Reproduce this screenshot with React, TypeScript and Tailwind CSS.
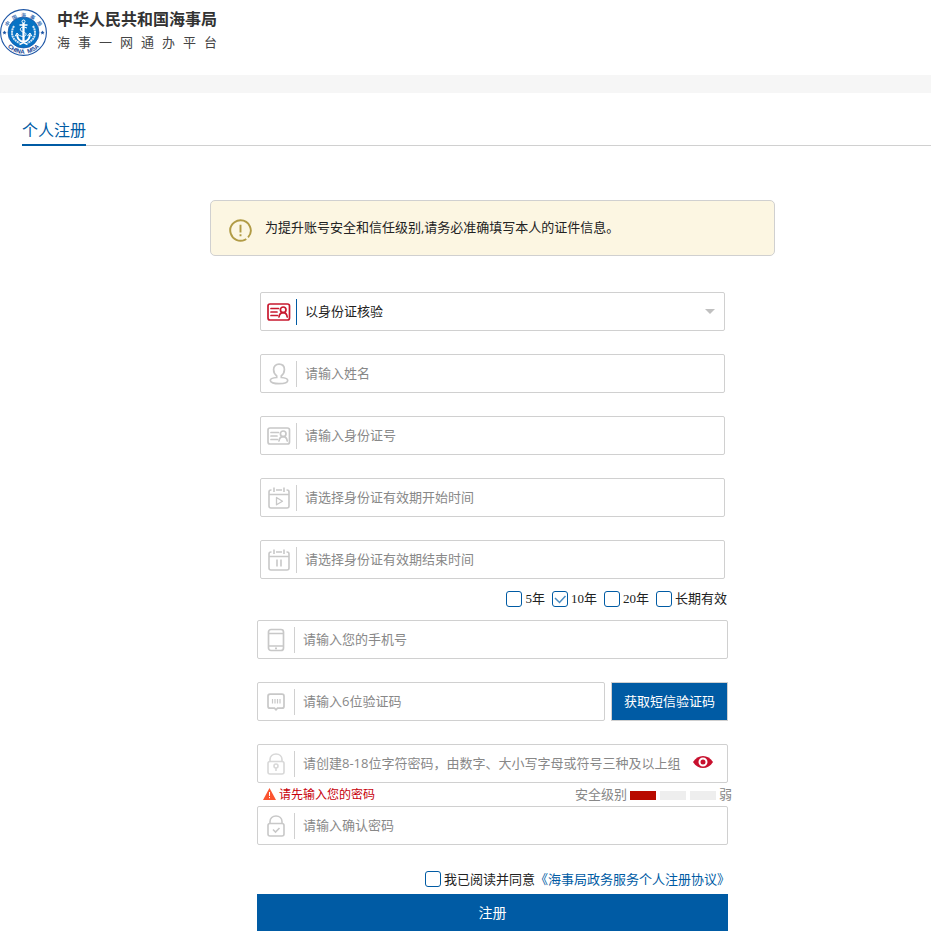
import { useState, type InputHTMLAttributes, type ReactNode } from 'react';

const fieldBox = 'flex h-[39px] items-center rounded-[2px] border border-[#d0d0d0] bg-white';
const fieldText =
  'h-full w-full min-w-0 flex-1 bg-transparent pb-0.5 pl-2 text-[13px] text-[#222] outline-none placeholder:text-[#888]';

function IdCardIcon() {
  return (
    <svg width="24" height="18" viewBox="0 0 24 18" fill="none" stroke="currentColor" strokeWidth="1.7" strokeLinecap="round" aria-hidden="true">
      <rect x="1" y="1" width="21.5" height="16" rx="2" />
      <path d="M4 5.5h7.5M4 9h6M4 12.5h6.5" />
      <circle cx="16.2" cy="6.8" r="2.8" />
      <path d="M12 14c.3-2.6 1.6-4.400 4.200-4.400s3.700 1.800 4 4.400" />
    </svg>
  );
}

function PersonIcon() {
  return (
    <svg width="20" height="22" viewBox="0 0 20 22" fill="none" stroke="currentColor" strokeWidth="1.7" aria-hidden="true">
      <path d="M7.700 13C5.800 11.500 4.600 9.500 4.600 6.600 4.600 3.200 6.900 1.200 10 1.200s5.400 2 5.400 5.400c0 2.900-1.200 4.900-3.100 6.400v1.500c3.700.2 6.400 1.200 6.400 3 0 2-3.700 3.200-8.700 3.200s-8.700-1.200-8.700-3.200c0-1.800 2.700-2.800 6.400-3z" />
    </svg>
  );
}

function CalendarIcon({ children }: { children: ReactNode }) {
  return (
    <svg width="22" height="22" viewBox="0 0 22 22" fill="none" stroke="currentColor" strokeWidth="1.6" aria-hidden="true">
      <path d="M3.500 3H3a2 2 0 0 0-2 2v14a2 2 0 0 0 2 2h16a2 2 0 0 0 2-2V5a2 2 0 0 0-2-2h-.5M8 3h6M1 7.500h20M6 .5V5M16 .5V5" />
      {children}
    </svg>
  );
}

function PhoneIcon() {
  return (
    <svg width="18" height="24" viewBox="0 0 18 24" fill="none" stroke="currentColor" strokeWidth="1.7" aria-hidden="true">
      <rect x="1.500" y="1.500" width="15" height="21" rx="2.500" />
      <path d="M1.500 5.500h15M1.500 18h15M8 20.300h2" />
    </svg>
  );
}

function MessageIcon() {
  return (
    <svg width="18" height="18" viewBox="0 0 18 18" fill="none" stroke="currentColor" strokeWidth="1.7" aria-hidden="true">
      <path d="M3 1.200h12a2 2 0 0 1 2 2v10a2 2 0 0 1-2 2h-4.500L9 16.800l-1.500-1.600H3a2 2 0 0 1-2-2v-10a2 2 0 0 1 2-2z" />
      <path d="M5.500 6v4.500M8 6v4.500M10.500 6v4.500M13 6v4.500" strokeWidth="1.200" />
    </svg>
  );
}

function LockIcon({ children }: { children: ReactNode }) {
  return (
    <svg width="18" height="22" viewBox="0 0 18 22" fill="none" stroke="currentColor" strokeWidth="1.6" aria-hidden="true">
      <rect x="1" y="8.500" width="16" height="12.500" rx="2" />
      <path d="M3 8.500v-2C3 3.200 5.600 1 9 1s6 2.200 6 5.500v2" />
      {children}
    </svg>
  );
}

function Emblem() {
  return (
    <svg width="47" height="47" viewBox="0 0 94 94" role="img" aria-label="中国海事局">
      <defs>
        <path id="emblem-top" d="M13 50a34 34 0 0 1 68 0" />
        <path id="emblem-bottom" d="M4.500 47a42.500 42.500 0 0 0 85 0" />
      </defs>
      <circle cx="47" cy="47" r="45.800" fill="#fff" stroke="#1d55a5" strokeWidth="2.200" />
      <circle cx="47" cy="47" r="31" fill="#0873c4" stroke="#1d55a5" strokeWidth="1.500" />
      <text fontSize="10" fontWeight="700" fill="#3c6fb4" className="font-['Noto_Sans_CJK_SC',sans-serif]">
        <textPath href="#emblem-top" startOffset="50%" textAnchor="middle">中&#160;&#160;&#160;国&#160;&#160;&#160;海&#160;&#160;&#160;事&#160;&#160;&#160;局</textPath>
      </text>
      <text fontSize="12" fontWeight="700" fill="#143f91" className="font-['Liberation_Sans',sans-serif]">
        <textPath href="#emblem-bottom" startOffset="50%" textAnchor="middle">CHINA&#160;&#160;MSA</textPath>
      </text>
      <path d="M9 43l1.200 2.700 3 .3-2.300 2 .7 3L9 49.500 6.400 51l.7-3-2.300-2 3-.3zM85 43l1.200 2.700 3 .3-2.300 2 .7 3-2.600-1.500-2.600 1.500.7-3-2.300-2 3-.3z" fill="#1d55a5" />
      <g fill="none" stroke="#fff">
        <circle cx="47" cy="25" r="3" strokeWidth="2" />
        <path d="M47 28v38" strokeWidth="4.500" />
        <path d="M39 32h16" strokeWidth="3" />
        <path d="M34 51c1 9 6 14 13 14s12-5 13-14" strokeWidth="4" />
        <path d="M30 55l4-7 5 6M64 55l-4-7-5 6" strokeWidth="2" />
        <path d="M28 34c-8 14-4 27 11 34M66 34c8 14 4 27-11 34" stroke="#d4e6f5" strokeWidth="4" strokeDasharray="4 1" />
        <path d="M39 71l8-4 8 4" strokeWidth="3" />
        <path d="M54 38c-7-4-15-1-13 4s12 4 11 9-8 5-12 2" strokeWidth="2" />
      </g>
    </svg>
  );
}

interface FieldProps extends InputHTMLAttributes<HTMLInputElement> {
  label: string;
  icon: ReactNode;
  wide?: boolean;
  action?: ReactNode;
}

function Field({ label, icon, wide, action, className = '', ...props }: FieldProps) {
  return (
    <div className={`${fieldBox} ${className}`}>
      <label className="flex h-full flex-1 items-center">
        <span className={`flex shrink-0 justify-center text-[#c8c8c8] ${wide ? 'w-9' : 'w-[35px]'}`}>{icon}</span>
        <span className="h-[26px] w-px shrink-0 bg-[#d0d0d0]" />
        <input aria-label={label} className={fieldText} {...props} />
      </label>
      {action}
    </div>
  );
}

interface CheckProps {
  checked: boolean;
  onChange: () => void;
  children: ReactNode;
}

function Check({ checked, onChange, children }: CheckProps) {
  return (
    <label className="flex cursor-pointer items-center gap-[3px]">
      <span className="relative flex size-4">
        <input
          type="checkbox"
          checked={checked}
          onChange={onChange}
          className="size-4 appearance-none rounded-[3px] border border-[#005ba4] bg-white"
        />
        {checked && (
          <svg className="pointer-events-none absolute inset-0" width="16" height="16" viewBox="0 0 16 16" fill="none" stroke="#4b8cc0" strokeWidth="1.5">
            <path d="M3 7l4.500 4.500L13.500 5" />
          </svg>
        )}
      </span>
      {children}
    </label>
  );
}

export default function App() {
  const [period, setPeriod] = useState('10年');
  const [agreed, setAgreed] = useState(false);
  const [showPassword, setShowPassword] = useState(false);

  return (
    <div className="bg-white font-['Open_Sans','Noto_Sans_CJK_SC',sans-serif] text-[13px] text-[#222]">
      <header className="flex h-[75px] items-start pt-[9px]">
        <Emblem />
        <div className="ml-[10px]">
          <h1 className="text-base leading-5 font-bold text-[#333]">中华人民共和国海事局</h1>
          <p className="text-[13px] leading-[26px] tracking-[8px] text-[#444]">海事一网通办平台</p>
        </div>
      </header>
      <div className="h-[18px] bg-[#f6f6f6]" />

      <main>
        <div className="ml-[22px] flex h-[53px] items-end border-b border-[#d0d0d0]">
          <h2 className="-mb-px border-b-2 border-[#005ba4] text-base leading-7 text-[#005ba4]">个人注册</h2>
        </div>

        <div className="pt-[54px] pl-[54px]">
          <div className="mx-auto flex h-14 max-w-[565px] items-center rounded-[5px] border border-[#d0d0d0] bg-[#fcf6e2] pl-[18px]">
            <svg width="23" height="23" viewBox="0 0 24 24" className="mt-1" fill="none" stroke="#b19b45" strokeWidth="2" aria-hidden="true">
              <path d="M19.900 19.200A10.700 10.700 0 0 0 12 1.300 10.700 10.700 0 1 0 18 20.900" strokeDasharray="31 0" />
              <path d="M12 6v8M12 16v2" />
            </svg>
            <p className="ml-[13px]">为提升账号安全和信任级别,请务必准确填写本人的证件信息。</p>
          </div>

          <form className="mx-auto mt-9 max-w-[471px]" onSubmit={(e) => e.preventDefault()}>
            <div className="flex flex-col gap-[23px] px-[3px]">
              <div className={`${fieldBox} relative`}>
                <span className="flex w-[35px] justify-center text-[#c8192f]">
                  <IdCardIcon />
                </span>
                <span className="h-[26px] w-px bg-[#005ba4]" />
                <select aria-label="核验方式" className="h-full flex-1 appearance-none bg-transparent pl-2 text-[13px] outline-none">
                  <option>以身份证核验</option>
                </select>
                <svg className="pointer-events-none absolute right-[9px]" width="10" height="6" viewBox="0 0 10 6" fill="#c0c0c0" aria-hidden="true">
                  <path d="M0 0h10L5 5z" />
                </svg>
              </div>
              <Field label="姓名" placeholder="请输入姓名" icon={<PersonIcon />} />
              <Field label="身份证号" placeholder="请输入身份证号" icon={<IdCardIcon />} />
              <Field
                label="有效期开始时间"
                placeholder="请选择身份证有效期开始时间"
                icon={
                  <CalendarIcon>
                    <path d="M8.500 10.500l6 3.700-6 3.600z" strokeWidth="1.300" strokeLinejoin="round" />
                  </CalendarIcon>
                }
              />
              <Field
                label="有效期结束时间"
                placeholder="请选择身份证有效期结束时间"
                icon={
                  <CalendarIcon>
                    <path d="M9 10.500v7M13 10.500v7" />
                  </CalendarIcon>
                }
              />
            </div>

            <div className="flex h-[41px] items-center justify-end gap-[7px] pr-px pb-0.5 font-['Liberation_Serif','Noto_Sans_CJK_SC',serif]">
              {['5年', '10年', '20年', '长期有效'].map((item) => (
                <Check key={item} checked={period === item} onChange={() => setPeriod(item)}>
                  {item}
                </Check>
              ))}
            </div>

            <Field wide label="手机号" type="tel" placeholder="请输入您的手机号" icon={<PhoneIcon />} />

            <div className="mt-[23px] flex gap-[6px]">
              <Field wide className="flex-1" label="验证码" placeholder="请输入6位验证码" icon={<MessageIcon />} />
              <button type="button" className="w-[117px] border border-[#d0d0d0] bg-[#005ba4] text-white">
                获取短信验证码
              </button>
            </div>

            <Field
              wide
              className="mt-[23px]"
              label="密码"
              type={showPassword ? 'text' : 'password'}
              placeholder="请创建8-18位字符密码，由数字、大小写字母或符号三种及以上组"
              icon={
                <span className="text-[#d8d8d8]">
                  <LockIcon>
                    <circle cx="9" cy="13" r="2" />
                    <path d="M9 15v3" />
                  </LockIcon>
                </span>
              }
              action={
                <button type="button" aria-label="显示密码" className="mr-[14px] shrink-0 pb-[3px]" onClick={() => setShowPassword(!showPassword)}>
                  <svg width="20" height="12" viewBox="0 0 20 12">
                    <path d="M0 6C2.500 2 6 0 10 0s7.500 2 10 6c-2.500 4-6 6-10 6S2.500 10 0 6z" fill="#c8102e" />
                    <circle cx="10" cy="6" r="3.500" fill="#c8102e" stroke="#fff" strokeWidth="2" />
                  </svg>
                </button>
              }
            />

            <div className="-mr-1 flex h-[23px] items-center justify-between">
              <p className="ml-[6px] flex items-center gap-[3px] text-xs text-[#c7000b]">
                <svg width="13" height="12" viewBox="0 0 13 12" className="mb-0.5" aria-hidden="true">
                  <path d="M6.500 0L13 12H0z" fill="#fb5430" />
                  <path d="M6.500 4v4M6.500 9v1.200" stroke="#fff" strokeWidth="1" />
                </svg>
                请先输入您的密码
              </p>
              <div className="flex items-center gap-[3px] text-[#888]">
                <span>安全级别</span>
                <span className="mt-0.5 flex gap-1">
                  <span className="h-[9px] w-[26px] bg-[#b80a00]" />
                  <span className="h-[9px] w-[26px] bg-[#eee]" />
                  <span className="h-[9px] w-[26px] bg-[#eee]" />
                </span>
                <span>弱</span>
              </div>
            </div>

            <Field
              wide
              label="确认密码"
              type="password"
              placeholder="请输入确认密码"
              icon={
                <LockIcon>
                  <path d="M6 14.500l2.500 2.500 4-4" />
                </LockIcon>
              }
            />

            <div className="flex h-[49px] items-end justify-end pb-[5px]">
              <Check checked={agreed} onChange={() => setAgreed(!agreed)}>
                我已阅读并同意
              </Check>
              <a href="#agreement" className="-mr-0.5 text-[#005ba4]">《海事局政务服务个人注册协议》</a>
            </div>
            <button type="submit" className="h-[37px] w-full bg-[#005ba4] text-sm text-white">
              注册
            </button>
          </form>
        </div>
      </main>
    </div>
  );
}
